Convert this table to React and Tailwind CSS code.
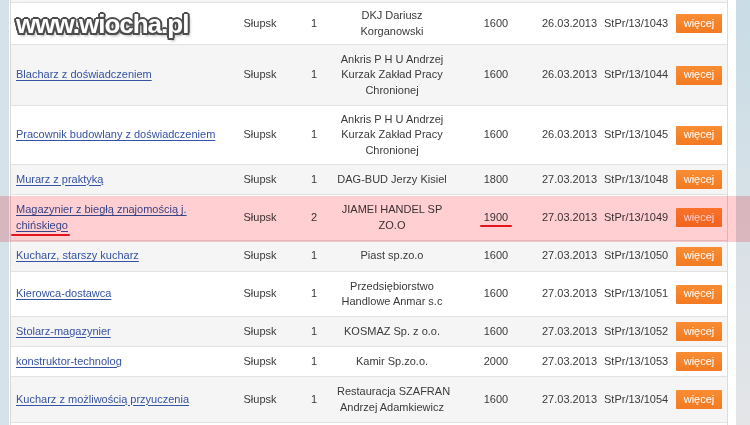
const rows = [
  { h: "h-[42px]", bg: "bg-white", title: ["Sprzedawca"], city: "Słupsk", n: "1", firm: ["DKJ Dariusz", "Korganowski"], pay: "1600", date: "26.03.2013", ref: "StPr/13/1043" },
  { h: "h-[61px]", bg: "bg-[#f5f5f5]", title: ["Blacharz z doświadczeniem"], city: "Słupsk", n: "1", firm: ["Ankris P H U Andrzej", "Kurzak Zakład Pracy", "Chronionej"], pay: "1600", date: "26.03.2013", ref: "StPr/13/1044" },
  { h: "h-[59px]", bg: "bg-white", title: ["Pracownik budowlany z doświadczeniem"], city: "Słupsk", n: "1", firm: ["Ankris P H U Andrzej", "Kurzak Zakład Pracy", "Chronionej"], pay: "1600", date: "26.03.2013", ref: "StPr/13/1045" },
  { h: "h-[30px]", bg: "bg-[#f5f5f5]", title: ["Murarz z praktyką"], city: "Słupsk", n: "1", firm: ["DAG-BUD Jerzy Kisiel"], pay: "1800", date: "27.03.2013", ref: "StPr/13/1048" },
  { h: "h-[46px]", bg: "bg-white", title: ["Magazynier z biegłą znajomością j.", "chińskiego"], city: "Słupsk", n: "2", firm: ["JIAMEI HANDEL SP", "ZO.O"], pay: "1900", date: "27.03.2013", ref: "StPr/13/1049" },
  { h: "h-[31px]", bg: "bg-[#f5f5f5]", title: ["Kucharz, starszy kucharz"], city: "Słupsk", n: "1", firm: ["Piast sp.zo.o"], pay: "1600", date: "27.03.2013", ref: "StPr/13/1050" },
  { h: "h-[45px]", bg: "bg-white", title: ["Kierowca-dostawca"], city: "Słupsk", n: "1", firm: ["Przedsiębiorstwo", "Handlowe Anmar s.c"], pay: "1600", date: "27.03.2013", ref: "StPr/13/1051" },
  { h: "h-[30px]", bg: "bg-[#f5f5f5]", title: ["Stolarz-magazynier"], city: "Słupsk", n: "1", firm: ["KOSMAZ Sp. z o.o."], pay: "1600", date: "27.03.2013", ref: "StPr/13/1052" },
  { h: "h-[30px]", bg: "bg-white", title: ["konstruktor-technolog"], city: "Słupsk", n: "1", firm: ["Kamir Sp.zo.o."], pay: "2000", date: "27.03.2013", ref: "StPr/13/1053" },
  { h: "h-[46px]", bg: "bg-[#f5f5f5]", title: ["Kucharz z możliwością przyuczenia"], city: "Słupsk", n: "1", firm: ["Restauracja SZAFRAN", "Andrzej Adamkiewicz"], pay: "1600", date: "27.03.2013", ref: "StPr/13/1054" },
];

const Lines = ({ lines }) =>
  lines.map((l, i) => (
    <span key={i} className="block whitespace-nowrap">
      {l}
    </span>
  ));

const Row = ({ r }) => (
  <div className={`flex items-center border-b border-[#e2e2e2] ${r.h} ${r.bg}`}>
    <div className="w-[218px] pl-[5px]">
      <a href="#" className="text-[#3652a3] underline underline-offset-2">
        <Lines lines={r.title} />
      </a>
    </div>
    <div className="w-[62px] text-center">{r.city}</div>
    <div className="w-[46px] text-center">{r.n}</div>
    <div className="w-[110px] text-center">
      <Lines lines={r.firm} />
    </div>
    <div className="w-[90px] pl-[8px] text-center">{r.pay}</div>
    <div className="w-[62px] pl-[5px]">{r.date}</div>
    <div className="w-[73px] pl-[5px]">{r.ref}</div>
    <div className="w-[55px] pl-[4px]">
      <button className="flex h-[19px] w-[46px] items-center justify-center rounded-[1px] bg-gradient-to-b from-[#f98d33] to-[#f27a22] text-white">
        więcej
      </button>
    </div>
  </div>
);

export default function App() {
  return (
    <div className="relative h-[425px] w-[750px] overflow-hidden bg-white font-['Liberation_Sans',Arial,sans-serif] text-[11px] leading-[15.5px] text-[#3a3a3a]">
      <div className="flex h-full">
        {/* left page gutter */}
        <div className="w-[9px] bg-[#d6e2ea]" />
        <div className="w-px bg-white" />

        {/* listing table */}
        <div className="w-[718px] border-x border-[#dcdcdc]">
          <div className="h-[3px] border-b border-[#e2e2e2] bg-[#f5f5f5]" />
          {rows.map((r, i) => (
            <Row key={i} r={r} />
          ))}
        </div>

        <div className="w-[8px] bg-white" />
        {/* right sidebar */}
        <div className="flex-1 bg-gradient-to-b from-[#c9dce6] via-[#d7e1e7] to-[#e4e5e7]" />
      </div>

      {/* highlight band */}
      <div className="absolute left-0 right-0 top-[196px] h-[46px] bg-[#ffcfd2] mix-blend-multiply" />

      {/* red marks */}
      <div className="absolute left-[11px] top-[234px] h-[2px] w-[59px] rounded-full bg-[#e3141e]" />
      <div className="absolute left-[480px] top-[225px] h-[2px] w-[32px] rounded-full bg-[#e3141e]" />

      {/* watermark */}
      <div className="absolute left-[16px] top-[9px] font-['Liberation_Sans',Arial,sans-serif] text-[26px] font-bold leading-[30px] tracking-[-1px] text-white [text-shadow:-2px_0_0_#4d4d4d,2px_0_0_#4d4d4d,0_-2px_0_#4d4d4d,0_2px_0_#4d4d4d,-1.5px_-1.5px_0_#4d4d4d,1.5px_-1.5px_0_#4d4d4d,-1.5px_1.5px_0_#4d4d4d,1.5px_1.5px_0_#4d4d4d,2px_3px_3px_rgba(0,0,0,0.35)]">
        www.wiocha.pl
      </div>
    </div>
  );
}
